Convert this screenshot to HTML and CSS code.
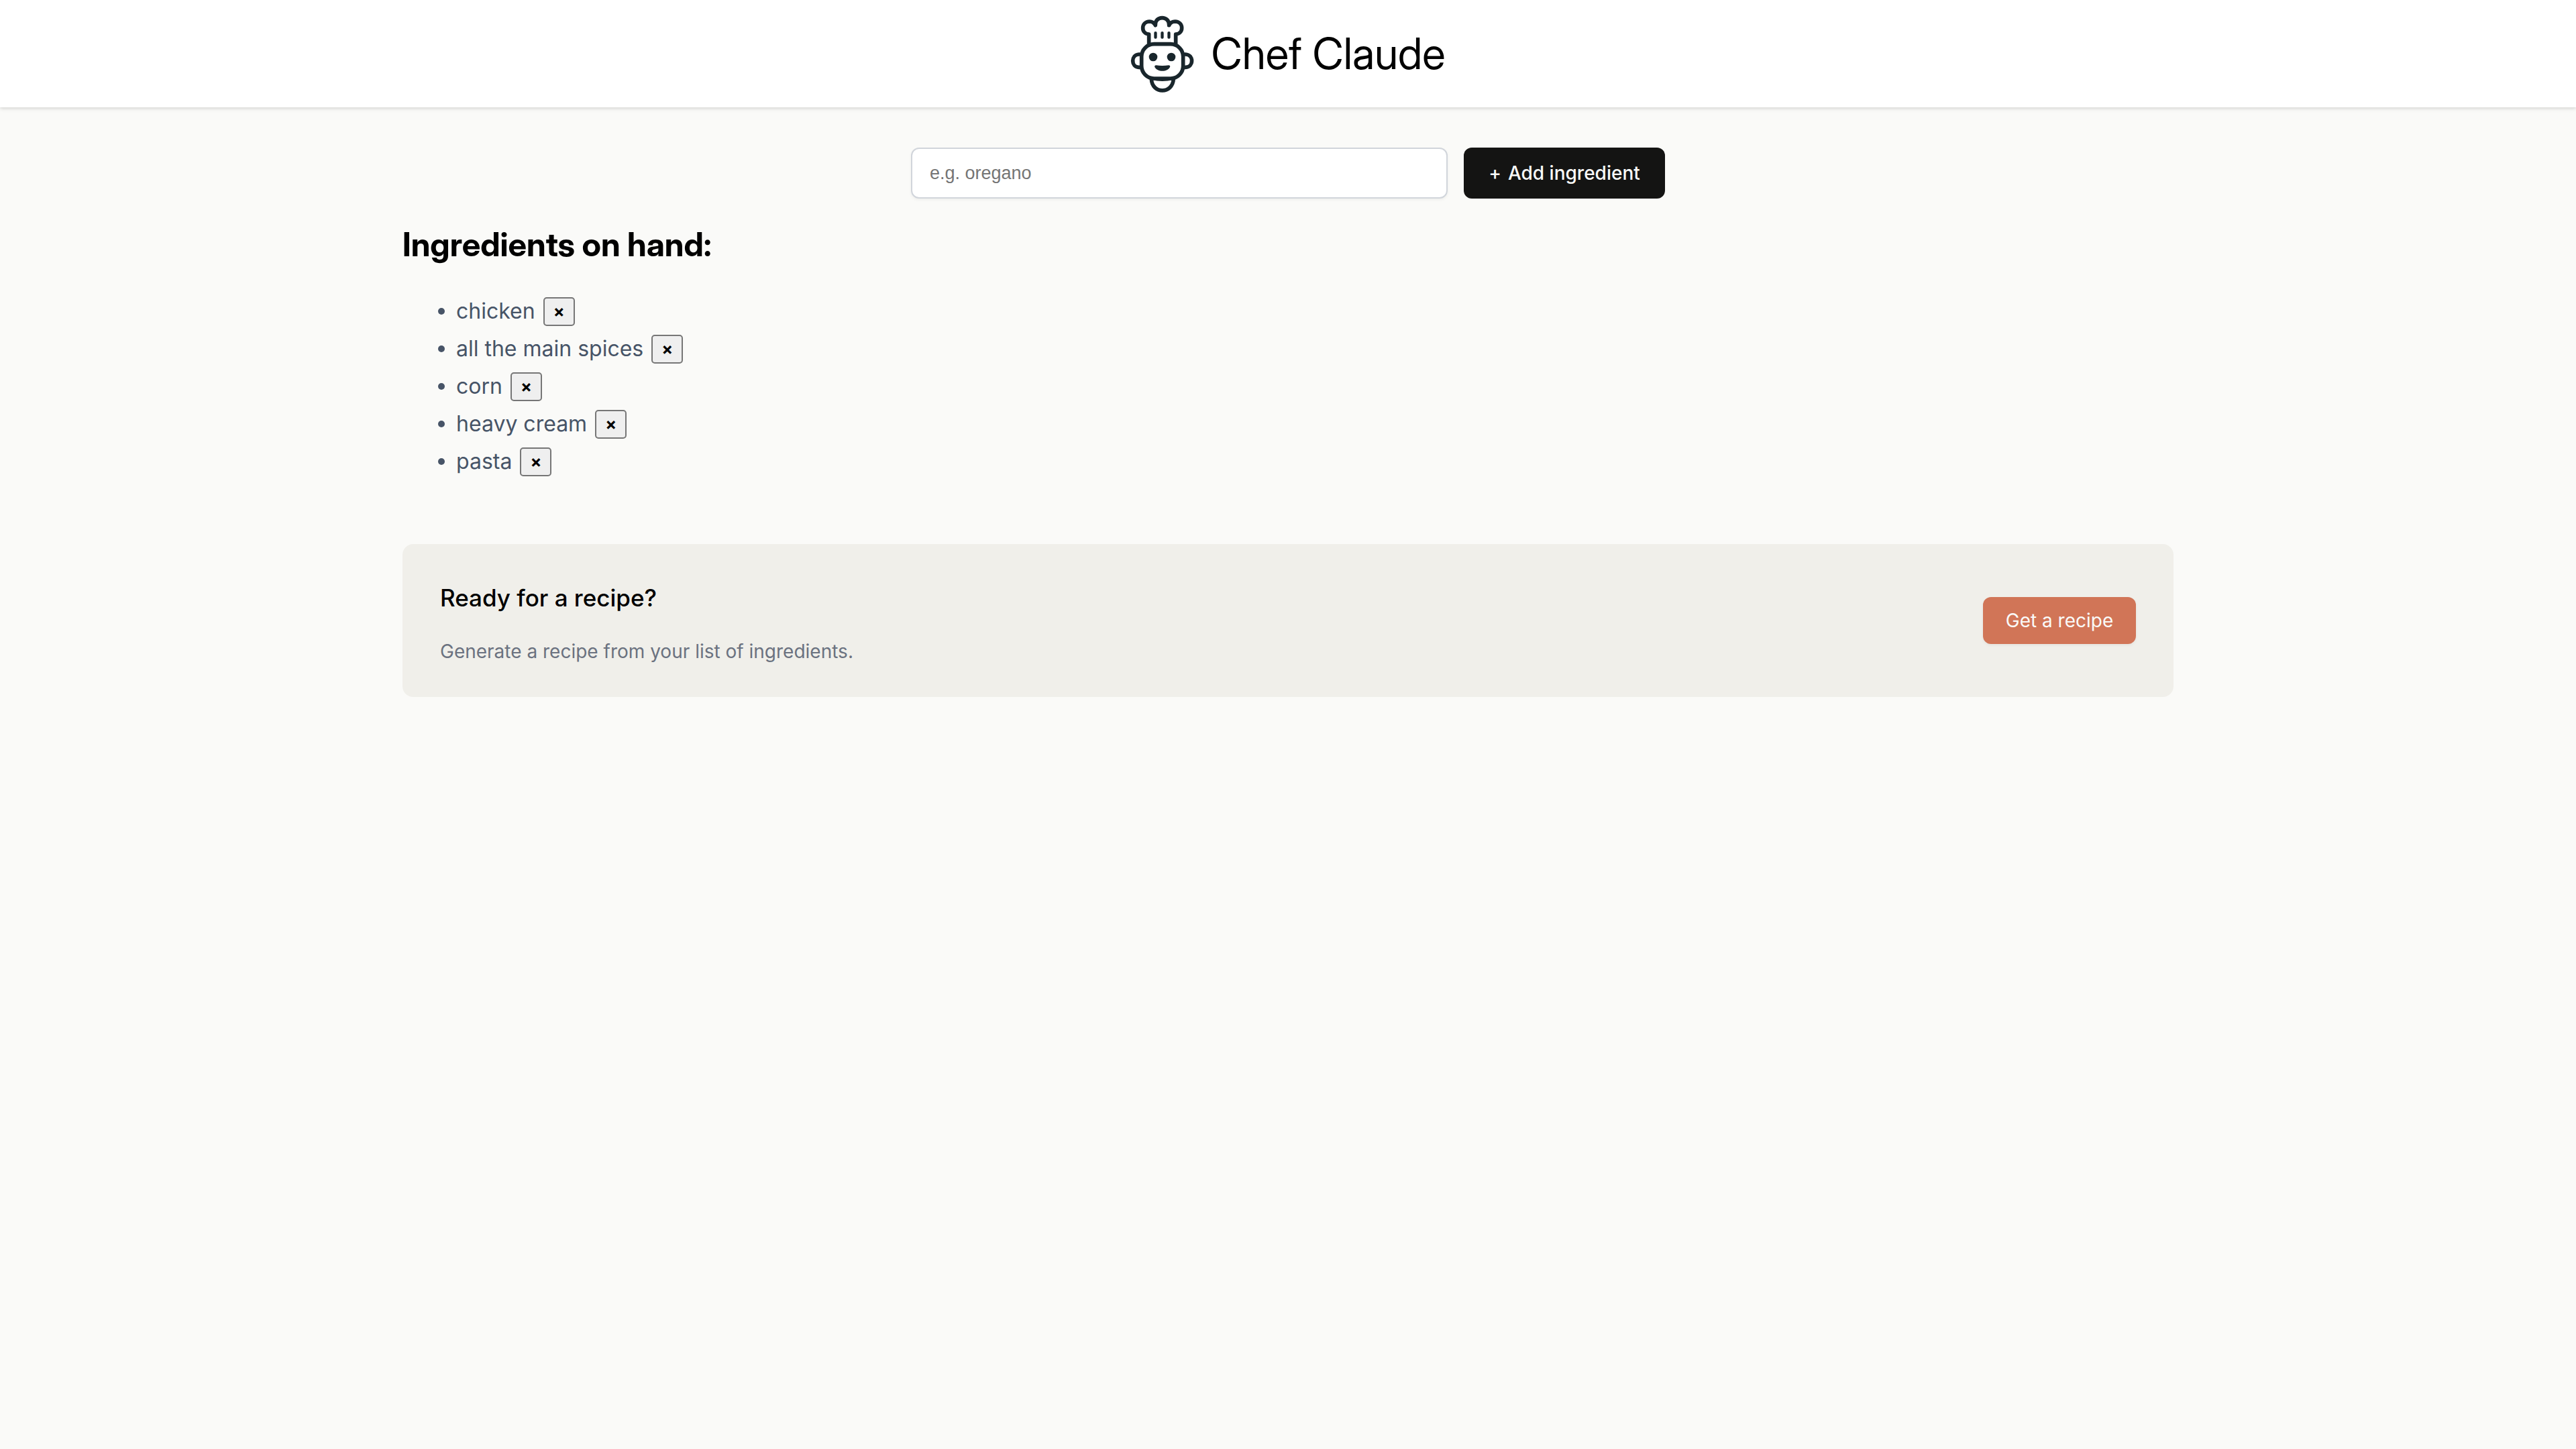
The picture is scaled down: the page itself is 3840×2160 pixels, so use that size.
FILE: index.html
```html
<!DOCTYPE html>
<html lang="en">
<head>
  <meta charset="utf-8">
  <meta name="viewport" content="width=device-width, initial-scale=1">
  <title>Chef Claude</title>
  <link rel="stylesheet" href="styles.css">
</head>
<body>
  <header class="site-header">
    <svg class="logo" viewBox="50 38 285 345" aria-hidden="true">
      <g fill="none" stroke="#19262c" stroke-width="17" stroke-linejoin="round">
        <path d="M133 166V122C96 120 97 66 136 65Q152 65 162 82C158 38 226 38 223 82Q232 65 250 65C289 66 290 120 253 122V166"/>
        <path d="M162 78V88M223 78V88" stroke-width="12"/>
        <rect x="100" y="166" width="186" height="154" rx="56"/>
        <path d="M100 212H88C52 214 52 268 88 270H100M286 212H297C334 214 334 268 297 270H286"/>
        <path d="M144 322C147 391 239 391 243 322"/>
      </g>
      <g fill="#19262c">
        <rect x="156" y="110" width="13" height="32" rx="6"/>
        <rect x="186" y="110" width="13" height="32" rx="6"/>
        <rect x="216" y="110" width="13" height="32" rx="6"/>
        <circle cx="152" cy="224" r="19"/>
        <circle cx="233" cy="224" r="19"/>
        <path d="M165 261Q193 265 221 261Q230 262 227 269C217 292 170 292 159 269Q157 262 165 261Z"/>
        <path d="M145 326Q193 338 241 326V318H145Z"/>
      </g>
    </svg>
    <h1 class="site-title">Chef Claude</h1>
  </header>

  <main class="page">
    <form class="add-form">
      <input class="add-input" type="text" placeholder="e.g. oregano" aria-label="Add ingredient">
      <button class="add-button" type="button"><span class="plus">+</span>Add ingredient</button>
    </form>

    <section>
      <h2 class="list-title">Ingredients on hand:</h2>
      <ul class="ingredients">
        <li><span>chicken</span><button class="remove" type="button" aria-label="Remove chicken">×</button></li>
        <li><span>all the main spices</span><button class="remove" type="button" aria-label="Remove all the main spices">×</button></li>
        <li><span>corn</span><button class="remove" type="button" aria-label="Remove corn">×</button></li>
        <li><span>heavy cream</span><button class="remove" type="button" aria-label="Remove heavy cream">×</button></li>
        <li><span>pasta</span><button class="remove" type="button" aria-label="Remove pasta">×</button></li>
      </ul>

      <div class="recipe-card">
        <div>
          <h3 class="recipe-title">Ready for a recipe?</h3>
          <p class="recipe-text">Generate a recipe from your list of ingredients.</p>
        </div>
        <button class="recipe-button" type="button">Get a recipe</button>
      </div>
    </section>
  </main>
</body>
</html>
```
FILE: styles.css
```css
* {
  box-sizing: border-box;
}

body {
  margin: 0;
  min-height: 100vh;
  background: #fafaf8;
  color: #000;
  font-family: Inter, "Liberation Sans", sans-serif;
  font-size: 32px;
}

button {
  font-family: inherit;
}

.site-header {
  display: flex;
  justify-content: center;
  align-items: center;
  gap: 25px;
  height: 160px;
  background: #fff;
  box-shadow: 0 2px 6px rgba(0, 0, 0, 0.1), 0 2px 4px rgba(0, 0, 0, 0.06);
}

.logo {
  width: 95px;
  height: 115px;
}

.site-title {
  margin: 0;
  font-family: "Inter Display", Inter, "Liberation Sans", sans-serif;
  font-size: 64px;
  font-weight: 400;
  line-height: 78px;
}

.page {
  max-width: 2760px;
  margin: 0 auto;
  padding: 60px 60px 20px;
}

.add-form {
  display: flex;
  justify-content: center;
  gap: 24px;
  height: 76px;
}

.add-input {
  flex: 0 1 800px;
  min-width: 300px;
  padding: 18px 26px;
  border: 2px solid #d1d5db;
  border-radius: 12px;
  background: #fff;
  box-shadow: 0 2px 4px rgba(0, 0, 0, 0.05);
  font-family: "Liberation Sans", Arial, sans-serif;
  font-size: 27px;
}

.add-input::placeholder {
  color: #757575;
}

.add-button {
  width: 300px;
  padding: 0;
  border: 0;
  border-radius: 12px;
  background: #141413;
  color: #fafaf8;
  font-size: 28px;
  font-weight: 500;
}

.plus {
  margin-right: 10px;
}

.list-title {
  margin: 40px 0 42px;
  font-family: "Inter Display", Inter, "Liberation Sans", sans-serif;
  font-size: 49px;
  font-weight: 700;
  line-height: 58px;
}

.ingredients {
  margin: 0;
  padding: 0 0 95px 53px;
  color: #475467;
  line-height: 56px;
  list-style: none;
}

.ingredients li {
  display: flex;
  align-items: center;
}

.ingredients li::before {
  content: "";
  width: 10px;
  height: 10px;
  margin-right: 17px;
  border-radius: 50%;
  background: #475467;
}

.remove {
  width: 47px;
  height: 43px;
  margin-left: 12px;
  padding: 0;
  border: 2px solid #767676;
  border-radius: 5px;
  background: #efefef;
  color: #000;
  font-size: 25px;
  font-weight: 700;
  line-height: 38px;
}

.recipe-card {
  display: flex;
  justify-content: space-between;
  align-items: center;
  padding: 0 56px;
  height: 228px;
  border-radius: 16px;
  background: #f0efea;
}

.recipe-title {
  margin: 8px 0 36px;
  font-size: 35px;
  font-weight: 500;
  line-height: 48px;
}

.recipe-text {
  margin: 0;
  color: #6b7280;
  font-size: 28px;
  line-height: 40px;
}

.recipe-button {
  width: 228px;
  height: 70px;
  padding: 0;
  border: 0;
  border-radius: 12px;
  background: #d17557;
  box-shadow: 0 2px 4px rgba(0, 0, 0, 0.05);
  color: #fafaf8;
  font-size: 28px;
}
```
